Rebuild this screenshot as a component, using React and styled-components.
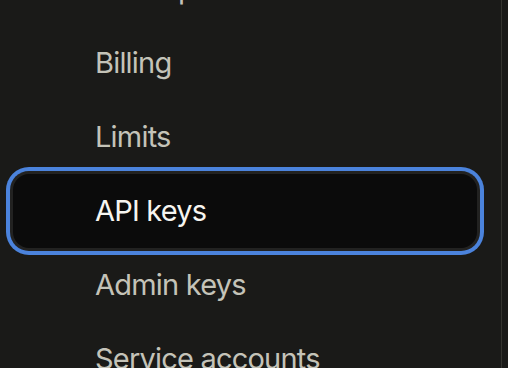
import styled, { createGlobalStyle } from 'styled-components';

const GlobalStyle = createGlobalStyle`
  html, body {
    margin: 0;
    padding: 0;
    background-color: #1a1a18;
    overflow: hidden;
  }
  body {
    font-family: Inter, "Noto Sans", "Liberation Sans", sans-serif;
  }
`;

const items = [
  { label: 'Workspaces' },
  { label: 'Billing' },
  { label: 'Limits' },
  { label: 'API keys', active: true },
  { label: 'Admin keys' },
  { label: 'Service accounts' },
];

function App() {
  return (
    <>
      <GlobalStyle />
      <Sidebar>
        <Nav>
          {items.map((item) => (
            <NavItem key={item.label} className={item.active ? 'active' : ''}>
              {item.label}
            </NavItem>
          ))}
        </Nav>
      </Sidebar>
    </>
  );
}

const Sidebar = styled.aside`
  width: 501px;
  height: 368px;
  border-right: 1px solid #34342f;
  background-color: #1a1a18;
  overflow: hidden;
`;

const Nav = styled.nav`
  display: flex;
  flex-direction: column;
  margin-top: -48px;
  padding: 0 24px 0 13px;
`;

const NavItem = styled.a`
  display: block;
  height: 74px;
  line-height: 74px;
  padding-left: 82px;
  font-size: 29px;
  font-weight: 400;
  letter-spacing: -0.8px;
  color: #c4c3b8;
  border-radius: 16px;
  white-space: nowrap;
  cursor: pointer;

  &.active {
    background-color: #0b0b0b;
    color: #f6f5f0;
    box-shadow: 0 0 0 3px #222221, 0 0 0 7px #4b83dc;
  }
`;

export default App;
